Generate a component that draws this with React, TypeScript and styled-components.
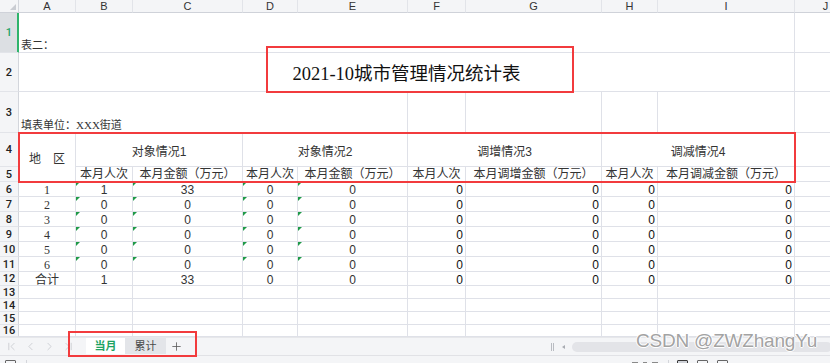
import React from 'react';
import styled, { createGlobalStyle, css } from 'styled-components';
import { ChevronFirst, ChevronLeft, ChevronRight, ChevronLast, Plus } from 'lucide-react';

const Global = createGlobalStyle`
  html, body { margin: 0; padding: 0; background: #fff; overflow: hidden; }
  body { width: 830px; height: 363px; }
  #root { width: 830px; height: 363px; }
`;

const SERIF = `"Liberation Serif", "Noto Sans CJK SC", serif`;
const SANS = `"Liberation Sans", "Noto Sans CJK SC", sans-serif`;
const LINE = '#dfe1e8';
const HEAD_BG = '#f4f5f7';

const COLS = [19, 57, 57, 110, 55, 110, 58, 136, 56, 137, 62];
const ROWS = [13, 40, 39, 41, 34, 15, 15, 15, 15, 15, 15, 15, 14, 13, 13, 13, 12];
const LETTERS = ['A', 'B', 'C', 'D', 'E', 'F', 'G', 'H', 'I', 'J'];

const Sheet = styled.div`
  position: relative;
  width: 830px;
  height: 363px;
  overflow: hidden;
  display: flex;
  flex-direction: column;
  background: #fff;
`;

const Grid = styled.div`
  display: grid;
  grid-template-columns: ${COLS.map((c) => `${c}px`).join(' ')};
  grid-template-rows: ${ROWS.map((r) => `${r}px`).join(' ')};
  flex: none;
`;

const Corner = styled.div`
  grid-column: 1;
  grid-row: 1;
  position: relative;
  background: ${HEAD_BG};
  border-right: 1px solid #d3d6dc;
  border-bottom: 1px solid #cfd2d9;
  box-sizing: border-box;
  &::after {
    content: '';
    position: absolute;
    right: 2px;
    bottom: 2px;
    width: 0;
    height: 0;
    border-left: 6px solid transparent;
    border-bottom: 6px solid #c9ccd2;
  }
`;

const ColHead = styled.div<{ $c: number }>`
  grid-column: ${(p) => p.$c};
  grid-row: 1;
  background: ${HEAD_BG};
  border-right: 1px solid #e2e4e9;
  border-bottom: 1px solid #cfd2d9;
  box-sizing: border-box;
  display: flex;
  align-items: center;
  justify-content: center;
  font: 11px/1 ${SANS};
  color: #333;
`;

const RowHead = styled.div<{ $r: number; $active?: boolean }>`
  grid-column: 1;
  grid-row: ${(p) => p.$r};
  background: ${(p) => (p.$active ? '#dcdfe3' : HEAD_BG)};
  border-right: 1px solid ${(p) => (p.$active ? '#2fb46c' : '#d3d6dc')};
  ${(p) => p.$active && css`box-shadow: inset -1px 0 0 #2fb46c;`}
  border-bottom: 1px solid #e2e4e9;
  box-sizing: border-box;
  display: flex;
  align-items: center;
  justify-content: center;
  font: 500 11px/1 Roboto, ${SANS};
  color: ${(p) => (p.$active ? '#21a366' : '#222')};
`;

type Align = 'flex-start' | 'center' | 'flex-end';

const Cell = styled.div<{
  $c: number;
  $r: number;
  $cs?: number;
  $rs?: number;
  $h?: Align;
  $v?: Align;
  $serif?: boolean;
  $size?: number;
  $ink?: string;
  $flag?: boolean;
  $pt?: number;
}>`
  grid-column: ${(p) => p.$c} / span ${(p) => p.$cs ?? 1};
  grid-row: ${(p) => p.$r} / span ${(p) => p.$rs ?? 1};
  position: relative;
  box-sizing: border-box;
  border-right: 1px solid ${LINE};
  border-bottom: 1px solid ${LINE};
  display: flex;
  justify-content: ${(p) => p.$h ?? 'center'};
  align-items: ${(p) => p.$v ?? 'center'};
  padding: ${(p) => p.$pt ?? 0}px 2px 0 2px;
  font-family: ${(p) => (p.$serif ? SERIF : SANS)};
  font-size: ${(p) => p.$size ?? 12}px;
  line-height: 14px;
  color: ${(p) => p.$ink ?? '#333'};
  white-space: nowrap;
  overflow: hidden;
  ${(p) =>
    p.$flag &&
    css`
      &::before {
        content: '';
        position: absolute;
        left: 0;
        top: 0;
        width: 0;
        height: 0;
        border-top: 4px solid #1f9a48;
        border-right: 4px solid transparent;
      }
    `}
`;

const Title = styled.span`
  font-family: ${SERIF};
  font-size: 18.5px;
  line-height: 22px;
  color: #111;
`;

const RedBox = styled.div<{ $x: number; $y: number; $w: number; $h: number }>`
  position: absolute;
  left: ${(p) => p.$x}px;
  top: ${(p) => p.$y}px;
  width: ${(p) => p.$w}px;
  height: ${(p) => p.$h}px;
  box-sizing: border-box;
  border: 2px solid #f23b3d;
  pointer-events: none;
`;

const Watermark = styled.div`
  position: absolute;
  left: 636px;
  top: 330px;
  font: 19px/22px ${SANS};
  color: #a3a3a3;
  letter-spacing: -0.2px;
  text-shadow: 0 0 1px #fff, 1px 0 0 #fff, -1px 0 0 #fff, 0 1px 0 #fff, 0 -1px 0 #fff;
  pointer-events: none;
`;

const TabBar = styled.div`
  height: 18px;
  flex: none;
  display: flex;
  align-items: stretch;
  background: ${HEAD_BG};
  border-top: 1px solid #e6e7ea;
  box-sizing: border-box;
  padding-left: 2px;
`;

const NavBtn = styled.div`
  width: 19px;
  display: flex;
  align-items: center;
  justify-content: center;
  color: #c3c6cc;
`;

const Tabs = styled.div`
  display: flex;
  align-items: stretch;
  margin-left: 8px;
  padding-bottom: 1px;
`;

const Tab = styled.div<{ $active?: boolean; $w: number }>`
  width: ${(p) => p.$w}px;
  display: flex;
  align-items: center;
  justify-content: center;
  background: ${(p) => (p.$active ? '#fff' : '#e3e5e9')};
  color: ${(p) => (p.$active ? '#1ea362' : '#4a4a4a')};
  font: ${(p) => (p.$active ? 600 : 400)} 11px/1 ${SANS};
`;

const AddBtn = styled.div`
  width: 18px;
  margin-left: 1px;
  display: flex;
  align-items: center;
  justify-content: center;
  color: #5a5a5a;
`;

const Spacer = styled.div`
  flex: 1;
`;

const Splitter = styled.div`
  width: 4px;
  display: flex;
  gap: 1px;
  align-items: center;
  margin-right: 7px;
  &::before,
  &::after {
    content: '';
    width: 1px;
    height: 8px;
    background: #b9bcc2;
  }
`;

const ScrollArrow = styled.div`
  width: 10px;
  display: flex;
  align-items: center;
  justify-content: flex-start;
  &::before {
    content: '';
    border-right: 3px solid #a9acb2;
    border-top: 2px solid transparent;
    border-bottom: 2px solid transparent;
  }
`;

const ScrollTrack = styled.div`
  width: 260px;
  margin-right: -2px;
  display: flex;
  align-items: center;
  &::before {
    content: '';
    width: 100%;
    height: 10px;
    border-radius: 5px;
    background: #e3e4e8;
  }
`;

const StatusBar = styled.div`
  flex: none;
  height: 30px;
  background: ${HEAD_BG};
  border-top: 1px solid #e1e2e6;
  box-sizing: border-box;
  display: flex;
  align-items: flex-start;
  padding: 4px 0 0 5px;
`;

const StatusIcon = styled.div<{ $dark?: boolean }>`
  width: 11px;
  height: 9px;
  box-sizing: border-box;
  border: 1.5px solid ${(p) => (p.$dark ? '#3a3a3a' : '#666')};
  border-radius: 1px;
  background: ${(p) => (p.$dark ? '#cfd2d8' : 'transparent')};
`;

const StatusSep = styled.div`
  width: 1px;
  height: 10px;
  background: #d4d6db;
  margin-left: 10px;
`;

const StatusMarks = styled.div`
  margin-left: auto;
  display: flex;
  gap: 5px;
  margin-top: 2px;
`;

const Mark = styled.div<{ $w: number }>`
  width: ${(p) => p.$w}px;
  height: 4px;
  border-top: 1.5px solid #8a8a8a;
  box-sizing: border-box;
`;

const ViewIcons = styled.div`
  display: flex;
  gap: 9px;
  margin: 0 102px 0 8px;
`;

const NUM_ALIGN: Align[] = ['center', 'center', 'center', 'center', 'flex-end', 'flex-end', 'flex-end', 'flex-end'];

const DATA: string[][] = [
  ['1', '1', '33', '0', '0', '0', '0', '0', '0'],
  ['2', '0', '0', '0', '0', '0', '0', '0', '0'],
  ['3', '0', '0', '0', '0', '0', '0', '0', '0'],
  ['4', '0', '0', '0', '0', '0', '0', '0', '0'],
  ['5', '0', '0', '0', '0', '0', '0', '0', '0'],
  ['6', '0', '0', '0', '0', '0', '0', '0', '0'],
  ['合计', '1', '33', '0', '0', '0', '0', '0', '0'],
];

const GROUPS = [
  { c: 3, label: '对象情况1' },
  { c: 5, label: '对象情况2' },
  { c: 7, label: '调增情况3' },
  { c: 9, label: '调减情况4' },
];

const SUBS = ['本月人次', '本月金额（万元）', '本月人次', '本月金额（万元）', '本月人次', '本月调增金额（万元）', '本月人次', '本月调减金额（万元）'];

export default function App() {
  const cells: React.ReactNode[] = [];

  cells.push(
    <Cell key="r1" $c={2} $cs={9} $r={2} $h="flex-start" $v="flex-end" $serif $size={11}>
      表二：
    </Cell>,
    <Cell key="r1j" $c={11} $r={2} />,
    <Cell key="r2" $c={2} $cs={9} $r={3} $pt={4}>
      <Title>2021-10城市管理情况统计表</Title>
    </Cell>,
    <Cell key="r2j" $c={11} $r={3} />,
    <Cell key="r3" $c={2} $cs={5} $r={4} $h="flex-start" $v="flex-end" $serif $size={11}>
      填表单位：XXX街道
    </Cell>
  );
  for (let c = 7; c <= 11; c++) cells.push(<Cell key={`r3-${c}`} $c={c} $r={4} />);

  cells.push(
    <Cell key="area" $c={2} $r={5} $rs={2} $pt={4} $serif>
      地　区
    </Cell>
  );
  GROUPS.forEach((g) =>
    cells.push(
      <Cell key={`g${g.c}`} $c={g.c} $cs={2} $r={5} $pt={4}>
        {g.label}
      </Cell>
    )
  );
  cells.push(<Cell key="r4j" $c={11} $r={5} />);
  SUBS.forEach((s, i) =>
    cells.push(
      <Cell key={`s${i}`} $c={i + 3} $r={6} $v="flex-end">
        {s}
      </Cell>
    )
  );
  cells.push(<Cell key="r5j" $c={11} $r={6} />);

  DATA.forEach((row, ri) => {
    const r = ri + 7;
    cells.push(
      <Cell key={`d${ri}a`} $c={2} $r={r} $serif $pt={2} $ink="#333">
        {row[0]}
      </Cell>
    );
    row.slice(1).forEach((v, ci) => {
      cells.push(
        <Cell
          key={`d${ri}-${ci}`}
          $c={ci + 3}
          $r={r}
          $h={NUM_ALIGN[ci]}
          $pt={2}
          $ink={ci >= 4 ? '#111' : '#333'}
          $flag={ri < 6 && ci < 4}
        >
          {v}
        </Cell>
      );
    });
    cells.push(<Cell key={`d${ri}j`} $c={11} $r={r} />);
  });

  for (let r = 14; r <= 17; r++) {
    for (let c = 2; c <= 11; c++) cells.push(<Cell key={`e${r}-${c}`} $c={c} $r={r} />);
  }

  return (
    <>
      <Global />
      <Sheet>
        <Grid>
          <Corner />
          {LETTERS.map((l, i) => (
            <ColHead key={l} $c={i + 2}>
              {l}
            </ColHead>
          ))}
          {Array.from({ length: 16 }, (_, i) => (
            <RowHead key={i} $r={i + 2} $active={i === 0}>
              {i + 1}
            </RowHead>
          ))}
          {cells}
        </Grid>
        <TabBar>
          <NavBtn>
            <ChevronFirst size={13} strokeWidth={1.4} />
          </NavBtn>
          <NavBtn>
            <ChevronLeft size={13} strokeWidth={1.4} />
          </NavBtn>
          <NavBtn>
            <ChevronRight size={13} strokeWidth={1.4} />
          </NavBtn>
          <NavBtn>
            <ChevronLast size={13} strokeWidth={1.4} />
          </NavBtn>
          <Tabs>
            <Tab $active $w={39}>当月</Tab>
            <Tab $w={41}>累计</Tab>
          </Tabs>
          <AddBtn>
            <Plus size={13} strokeWidth={1.5} />
          </AddBtn>
          <Spacer />
          <Splitter />
          <ScrollArrow />
          <ScrollTrack />
        </TabBar>
        <StatusBar>
          <StatusIcon />
          <StatusSep />
          <StatusMarks>
            <Mark $w={6} />
            <Mark $w={4} />
            <Mark $w={6} />
          </StatusMarks>
          <StatusSep />
          <ViewIcons>
            <StatusIcon $dark />
            <StatusIcon />
            <StatusIcon />
          </ViewIcons>
        </StatusBar>
        <RedBox $x={266} $y={46} $w={308} $h={47} />
        <RedBox $x={18} $y={132} $w={778} $h={51} />
        <RedBox $x={68} $y={331} $w={129} $h={26} />
        <Watermark>CSDN @ZWZhangYu</Watermark>
      </Sheet>
    </>
  );
}
